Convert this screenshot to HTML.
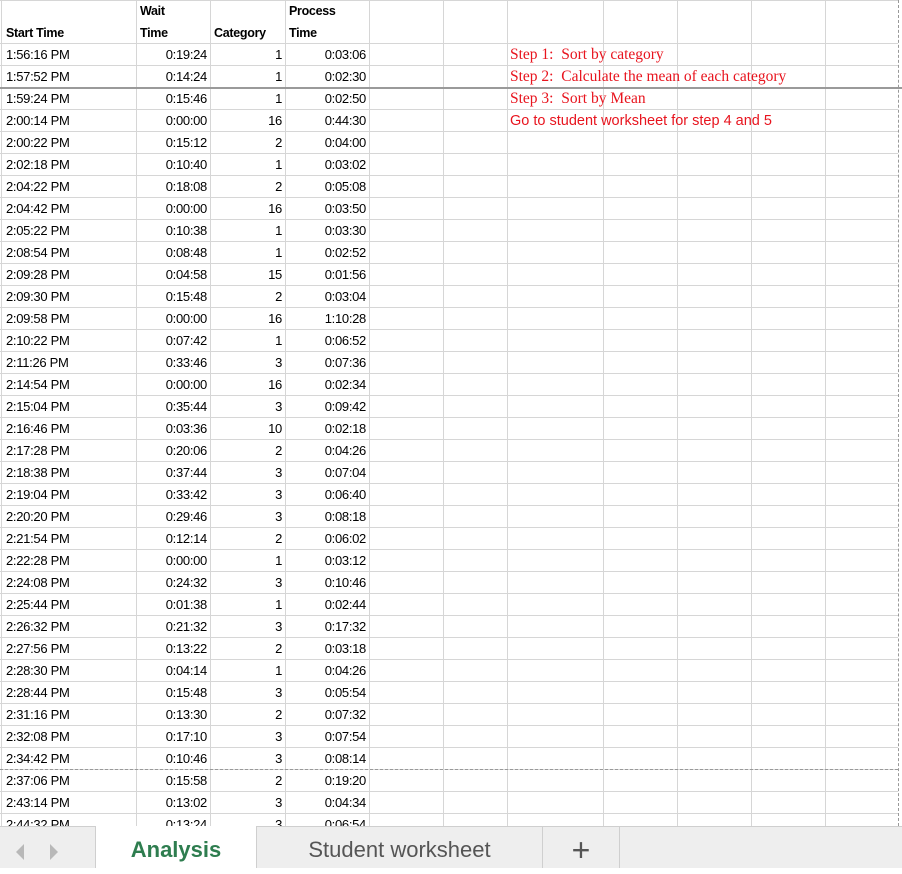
<!DOCTYPE html>
<html><head><meta charset="utf-8"><style>
body{margin:0;width:902px;height:868px;overflow:hidden;background:#fff;position:relative;font-family:"Liberation Sans",sans-serif;}
.v{position:absolute;top:0;height:826px;width:1px;background:#d6d6d6}
.h{position:absolute;left:0;width:898px;height:1px;background:#d6d6d6}
.t{position:absolute;font-size:13px;line-height:22px;height:22px;white-space:nowrap;letter-spacing:-0.3px}
.hd{font-weight:bold;font-size:12.5px}
.red{color:#e8141e;font-family:"Liberation Serif",serif;font-size:15.5px;letter-spacing:0}
.red2{color:#e8141e;font-size:14.5px;letter-spacing:0}
.fz{position:absolute;left:0;top:87px;width:902px;height:2px;background:#9a9a9a}
.dash{position:absolute;left:0;top:769px;width:898px;border-top:1px dashed #999}
.vd{position:absolute;left:898px;top:0;height:826px;border-left:1px dashed #999}
.bar{position:absolute;left:0;top:826px;width:902px;height:42px;background:#eeeeee;border-top:1px solid #cfcfcf;box-sizing:border-box}
.tab{position:absolute;top:826px;height:42px;box-sizing:border-box;font-size:22px;line-height:48px;text-align:center}
</style></head><body>
<div id="g"></div>
<div class="fz"></div><div class="dash"></div><div class="vd"></div>
<div class="bar"></div>
<svg style="position:absolute;left:0;top:826px" width="96" height="42"><polygon points="16,26 24,18 24,34" fill="#b8b8b8"/><polygon points="50,18 58,26 50,34" fill="#b8b8b8"/></svg>
<div class="tab" style="left:95px;width:162px;background:#fff;border-left:1px solid #cfcfcf;border-right:1px solid #cfcfcf;color:#2e7d4f;font-weight:bold">Analysis</div>
<div class="tab" style="left:257px;width:286px;color:#555;border-right:1px solid #cfcfcf">Student worksheet</div>
<div class="tab" style="left:543px;width:77px;color:#555;border-right:1px solid #cfcfcf;font-size:32px;line-height:48px">+</div>
<script>
var d=[["1:56:16 PM","0:19:24",1,"0:03:06"],["1:57:52 PM","0:14:24",1,"0:02:30"],["1:59:24 PM","0:15:46",1,"0:02:50"],["2:00:14 PM","0:00:00",16,"0:44:30"],["2:00:22 PM","0:15:12",2,"0:04:00"],["2:02:18 PM","0:10:40",1,"0:03:02"],["2:04:22 PM","0:18:08",2,"0:05:08"],["2:04:42 PM","0:00:00",16,"0:03:50"],["2:05:22 PM","0:10:38",1,"0:03:30"],["2:08:54 PM","0:08:48",1,"0:02:52"],["2:09:28 PM","0:04:58",15,"0:01:56"],["2:09:30 PM","0:15:48",2,"0:03:04"],["2:09:58 PM","0:00:00",16,"1:10:28"],["2:10:22 PM","0:07:42",1,"0:06:52"],["2:11:26 PM","0:33:46",3,"0:07:36"],["2:14:54 PM","0:00:00",16,"0:02:34"],["2:15:04 PM","0:35:44",3,"0:09:42"],["2:16:46 PM","0:03:36",10,"0:02:18"],["2:17:28 PM","0:20:06",2,"0:04:26"],["2:18:38 PM","0:37:44",3,"0:07:04"],["2:19:04 PM","0:33:42",3,"0:06:40"],["2:20:20 PM","0:29:46",3,"0:08:18"],["2:21:54 PM","0:12:14",2,"0:06:02"],["2:22:28 PM","0:00:00",1,"0:03:12"],["2:24:08 PM","0:24:32",3,"0:10:46"],["2:25:44 PM","0:01:38",1,"0:02:44"],["2:26:32 PM","0:21:32",3,"0:17:32"],["2:27:56 PM","0:13:22",2,"0:03:18"],["2:28:30 PM","0:04:14",1,"0:04:26"],["2:28:44 PM","0:15:48",3,"0:05:54"],["2:31:16 PM","0:13:30",2,"0:07:32"],["2:32:08 PM","0:17:10",3,"0:07:54"],["2:34:42 PM","0:10:46",3,"0:08:14"],["2:37:06 PM","0:15:58",2,"0:19:20"],["2:43:14 PM","0:13:02",3,"0:04:34"],["2:44:32 PM","0:13:24",3,"0:06:54"]];
var notes=['<span class="red">Step 1:&nbsp; Sort by category</span>','<span class="red">Step 2:&nbsp; Calculate the mean of each category</span>','<span class="red">Step 3:&nbsp; Sort by Mean</span>','<span class="red2">Go to student worksheet for step 4 and 5</span>'];
var cols=[1,136,210,285,369,443,507,603,677,751,825];
var h='';
cols.forEach(function(x){h+='<div class="v" style="left:'+x+'px"></div>';});
h+='<div class="h" style="top:0"></div>';
for(var y=43;y<826;y+=22)h+='<div class="h" style="top:'+y+'px"></div>';
function L(x,y,s,c){return '<div class="t '+(c||'')+'" style="left:'+x+'px;top:'+y+'px">'+s+'</div>';}
function R(x,y,s,c){return '<div class="t '+(c||'')+'" style="right:'+(902-x)+'px;top:'+y+'px">'+s+'</div>';}
h+=L(6,22,'Start Time','hd')+L(140,0,'Wait','hd')+L(140,22,'Time','hd')+L(214,22,'Category','hd')+L(289,0,'Process','hd')+L(289,22,'Time','hd');
d.forEach(function(r,i){var y=44+22*i;h+=L(6,y,r[0])+R(207,y,r[1])+R(282,y,r[2])+R(366,y,r[3]);if(i<4)h+=L(510,y,notes[i]);});
document.getElementById('g').innerHTML=h;
</script>
</body></html>
